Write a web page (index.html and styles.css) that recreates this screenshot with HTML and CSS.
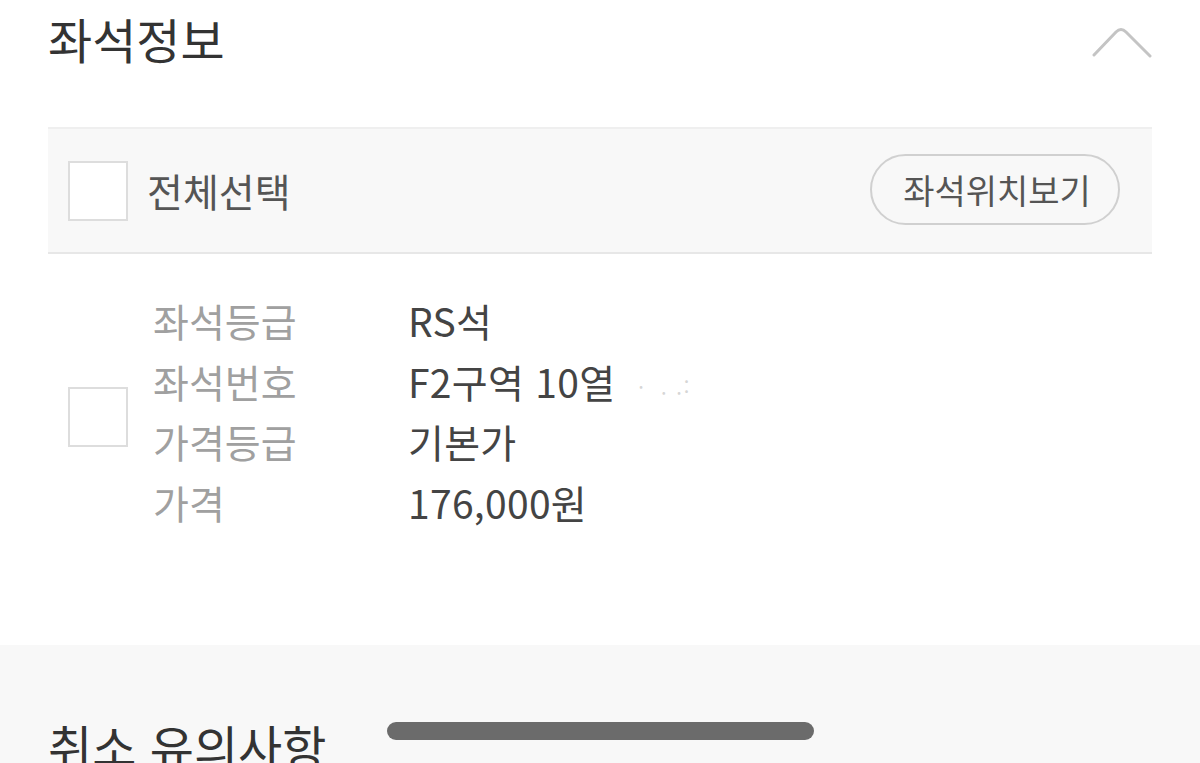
FILE: index.html
```html
<!DOCTYPE html>
<html lang="ko">
<head>
<meta charset="utf-8">
<title>좌석정보</title>
<link rel="stylesheet" href="styles.css">
</head>
<body>
<div class="page">
  <section class="seat-section">
    <header class="section-head">
      <h2 class="section-title">좌석정보</h2>
      <svg class="chevron" width="60" height="34" viewBox="0 0 60 34" aria-hidden="true">
        <path d="M2 30 L24 7 Q29 2 34 7 L58 31" fill="none" stroke="#c4c4c4" stroke-width="3" stroke-linecap="round" stroke-linejoin="round"/>
      </svg>
    </header>

    <div class="select-bar">
      <label class="select-all">
        <span class="box"></span>
        <span class="select-text">전체선택</span>
      </label>
      <button class="pill-btn" type="button">좌석위치보기</button>
    </div>

    <div class="seat-item">
      <span class="box"></span>
      <dl class="info">
        <dt>좌석등급</dt><dd>RS석</dd>
        <dt>좌석번호</dt><dd>F2구역 10열<span class="mask">&nbsp;&nbsp;&nbsp;· &nbsp;. .:</span></dd>
        <dt>가격등급</dt><dd>기본가</dd>
        <dt>가격</dt><dd>176,000원</dd>
      </dl>
    </div>
  </section>

  <section class="notice-section">
    <h2 class="section-title">취소 유의사항</h2>
  </section>
</div>
<div class="home-indicator"></div>
</body>
</html>
```

FILE: styles.css
```css
* { box-sizing: border-box; }

html, body {
  margin: 0;
  padding: 0;
  background: #ffffff;
  font-family: "Noto Sans CJK KR", "Noto Sans", sans-serif;
  overflow: hidden;
  height: 763px;
}

.page {
  display: flex;
  flex-direction: column;
}

.seat-section {
  padding: 0 48px;
}

.section-head {
  height: 76px;
  margin-bottom: 51px;
  display: flex;
  align-items: center;
  justify-content: space-between;
}

.section-title {
  margin: 0;
  font-size: 48px;
  font-weight: 400;
  color: #333333;
  line-height: 1;
}

.chevron {
  margin-top: 8px;
}

.select-bar {
  height: 127px;
  background: #f8f8f8;
  border-top: 2px solid #efefef;
  border-bottom: 2px solid #e7e7e7;
  display: flex;
  align-items: center;
  justify-content: space-between;
  padding: 0 32px 0 20px;
}

.select-all {
  display: flex;
  align-items: center;
  gap: 19px;
}

.box {
  width: 60px;
  height: 60px;
  background: #ffffff;
  border: 2px solid #dddddd;
  flex: none;
}

.select-text {
  font-size: 39px;
  color: #555555;
  line-height: 1;
}

.pill-btn {
  width: 250px;
  height: 71px;
  border: 2px solid #d0d0d0;
  border-radius: 36px;
  background: #f8f8f8;
  font-family: inherit;
  font-size: 34px;
  color: #555555;
  padding: 0 0 0 4px;
  margin-top: -2px;
}

.seat-item {
  display: flex;
  align-items: center;
  padding: 36px 0 113px 20px;
  gap: 25px;
}

.seat-item .box {
  margin-top: 12px;
}

.info {
  margin: 0;
  display: grid;
  grid-template-columns: 255px auto;
  grid-auto-rows: 60.5px;
  font-size: 39px;
  line-height: 60.5px;
}

.info dt {
  color: #a0a0a0;
}

.info dd {
  margin: 0;
  color: #444444;
  letter-spacing: 0.3px;
}

.mask {
  color: #d6d6d6;
  font-size: 20px;
  line-height: 1;
  letter-spacing: 2px;
  vertical-align: middle;
}

.notice-section {
  background: #f8f8f8;
  flex: 1;
  min-height: 200px;
  padding: 76px 48px 0;
}

.home-indicator {
  position: absolute;
  left: 387px;
  top: 722px;
  width: 427px;
  height: 18px;
  border-radius: 9px;
  background: #6b6b6b;
}
```
